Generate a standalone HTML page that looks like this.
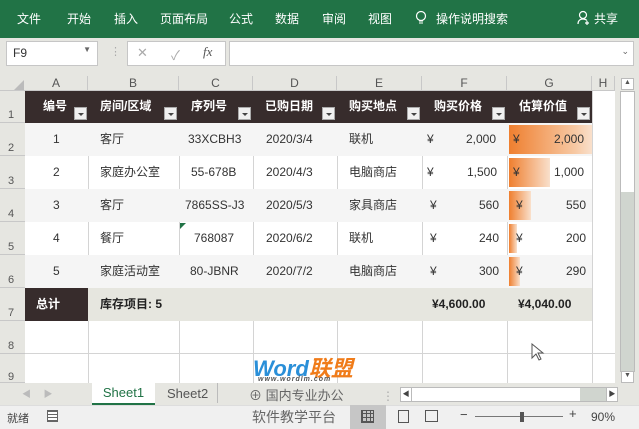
<!DOCTYPE html><html><head><meta charset="utf-8"><style>
*{margin:0;padding:0;box-sizing:border-box}
body{width:639px;height:429px;overflow:hidden;background:#e6e6e1;font-family:"Liberation Sans","Noto Sans CJK SC",sans-serif;position:relative;font-size:12px;color:#333}
.a{position:absolute}
.menu span{position:absolute;top:10px;color:#fff;font-size:12px}
.ch{position:absolute;top:76px;height:15px;text-align:center;font-size:12px;color:#555;border-right:1px solid #c8c8c8}
.rh{position:absolute;left:0;width:25px;font-size:11px;color:#555;border-bottom:1px solid #c8c8c8;text-align:left;padding-left:8px}
.c{position:absolute;font-size:12px;line-height:33px;height:33px;color:#333}
.hd{position:absolute;top:91px;height:32px;color:#fff;font-weight:bold;font-size:12px;line-height:30px}
.dd{position:absolute;top:107px;width:13px;height:13px;background:#f0f0f0;border:1px solid #aaa}
.dd:after{content:"";position:absolute;left:3px;top:5px;border:3px solid transparent;border-top:3px solid #444}
.vl{position:absolute;width:1px;background:#d4d4d4}
</style></head><body>
<div class="a" style="left:0;top:0;width:639px;height:38px;background:#217346"></div>
<div class="menu">
<span style="left:17px">文件</span><span style="left:67px">开始</span><span style="left:114px">插入</span><span style="left:160px">页面布局</span><span style="left:229px">公式</span><span style="left:275px">数据</span><span style="left:322px">审阅</span><span style="left:368px">视图</span><span style="left:436px">操作说明搜索</span><span style="left:594px">共享</span>
</div>
<svg class="a" style="left:415px;top:10px" width="12" height="16"><circle cx="6" cy="6" r="4.5" fill="none" stroke="#fff" stroke-width="1.2"/><path d="M4 11h4M4 13h4" stroke="#fff"/></svg>
<svg class="a" style="left:577px;top:10px" width="14" height="16"><circle cx="6" cy="5" r="3.5" fill="none" stroke="#fff" stroke-width="1.2"/><path d="M1 14c0-4 3-5 5-5s3 .5 4 1.5M10 11v4M8 13h4" stroke="#fff" fill="none" stroke-width="1.2"/></svg>
<div class="a" style="left:6px;top:41px;width:92px;height:25px;background:#fff;border:1px solid #c6c6c6;padding:4px 6px;font-size:12px">F9<span style="position:absolute;right:6px;top:3px;font-size:8px;color:#666">▼</span></div>
<div class="a" style="left:110px;top:45px;color:#aaa;font-size:11px">⋮</div>
<div class="a" style="left:127px;top:41px;width:99px;height:25px;background:#fff;border:1px solid #c6c6c6"></div>
<div class="a" style="left:137px;top:45px;color:#aaa;font-size:13px">✕</div>
<div class="a" style="left:171px;top:45px;color:#aaa;font-size:13px">✓</div>
<div class="a" style="left:203px;top:44px;font-style:italic;font-family:'Liberation Serif',serif;font-size:13px;color:#555">fx</div>
<div class="a" style="left:229px;top:41px;width:405px;height:25px;background:#fff;border:1px solid #c6c6c6"><span style="position:absolute;right:4px;top:4px;font-size:9px;color:#666">⌄</span></div>
<div class="a" style="left:25px;top:91px;width:590px;height:292px;background:#fff"></div>
<div class="a" style="left:0;top:75px;width:615px;height:16px;background:#e6e6e1;border-bottom:1px solid #c8c8c8"></div>
<div class="ch" style="left:25px;width:63px">A</div><div class="ch" style="left:88px;width:91px">B</div><div class="ch" style="left:179px;width:74px">C</div><div class="ch" style="left:253px;width:84px">D</div><div class="ch" style="left:337px;width:85px">E</div><div class="ch" style="left:422px;width:85px">F</div><div class="ch" style="left:507px;width:85px">G</div><div class="ch" style="left:592px;width:23px">H</div>
<div class="a" style="left:14px;top:80px;border:5px solid transparent;border-right-color:#bbb;border-bottom-color:#bbb"></div>
<div class="rh" style="top:91px;height:32px;padding-top:18px">1</div>
<div class="rh" style="top:123px;height:33px;padding-top:19px">2</div>
<div class="rh" style="top:156px;height:33px;padding-top:19px">3</div>
<div class="rh" style="top:189px;height:33px;padding-top:19px">4</div>
<div class="rh" style="top:222px;height:33px;padding-top:19px">5</div>
<div class="rh" style="top:255px;height:33px;padding-top:19px">6</div>
<div class="rh" style="top:288px;height:33px;padding-top:19px">7</div>
<div class="rh" style="top:321px;height:33px;padding-top:19px">8</div>
<div class="rh" style="top:354px;height:29px;padding-top:17px">9</div>
<div class="a" style="left:25px;top:353px;width:590px;height:1px;background:#d4d4d4"></div>
<div class="vl" style="left:88px;top:321px;height:62px"></div><div class="vl" style="left:179px;top:321px;height:62px"></div><div class="vl" style="left:253px;top:321px;height:62px"></div><div class="vl" style="left:337px;top:321px;height:62px"></div><div class="vl" style="left:422px;top:321px;height:62px"></div><div class="vl" style="left:507px;top:321px;height:62px"></div><div class="vl" style="left:592px;top:91px;height:292px"></div>
<div class="a" style="left:25px;top:91px;width:567px;height:32px;background:#372c2c"></div>
<div class="hd" style="left:43px">编号</div><div class="dd" style="left:74px"></div>
<div class="hd" style="left:100px">房间/区域</div><div class="dd" style="left:164px"></div>
<div class="hd" style="left:191px">序列号</div><div class="dd" style="left:238px"></div>
<div class="hd" style="left:265px">已购日期</div><div class="dd" style="left:322px"></div>
<div class="hd" style="left:349px">购买地点</div><div class="dd" style="left:407px"></div>
<div class="hd" style="left:434px">购买价格</div><div class="dd" style="left:492px"></div>
<div class="hd" style="left:519px">估算价值</div><div class="dd" style="left:577px"></div>
<div class="a" style="left:25px;top:123px;width:567px;height:33px;background:#f5f5f5"></div>
<div class="a" style="left:25px;top:189px;width:567px;height:33px;background:#f5f5f5"></div>
<div class="a" style="left:25px;top:255px;width:567px;height:33px;background:#f5f5f5"></div>
<div class="vl" style="left:88px;top:156px;height:33px"></div><div class="vl" style="left:179px;top:156px;height:33px"></div><div class="vl" style="left:253px;top:156px;height:33px"></div><div class="vl" style="left:337px;top:156px;height:33px"></div><div class="vl" style="left:422px;top:156px;height:33px"></div><div class="vl" style="left:507px;top:156px;height:33px"></div>
<div class="vl" style="left:88px;top:222px;height:33px"></div><div class="vl" style="left:179px;top:222px;height:33px"></div><div class="vl" style="left:253px;top:222px;height:33px"></div><div class="vl" style="left:337px;top:222px;height:33px"></div><div class="vl" style="left:422px;top:222px;height:33px"></div><div class="vl" style="left:507px;top:222px;height:33px"></div>
<div class="a" style="left:509px;top:125px;width:83px;height:29px;background:linear-gradient(90deg,#ef7f2f,#f7c9a4 80%,#f9e0cc)"></div>
<div class="a" style="left:509px;top:158px;width:41px;height:29px;background:linear-gradient(90deg,#ef7f2f,#f9e0cc)"></div>
<div class="a" style="left:509px;top:191px;width:22px;height:29px;background:linear-gradient(90deg,#ef7f2f,#f9e0cc)"></div>
<div class="a" style="left:509px;top:224px;width:8px;height:29px;background:linear-gradient(90deg,#ef7f2f,#f9e0cc)"></div>
<div class="a" style="left:509px;top:257px;width:11px;height:29px;background:linear-gradient(90deg,#ef7f2f,#f9e0cc)"></div>
<div class="c" style="top:123px;left:53px">1</div><div class="c" style="top:123px;left:100px">客厅</div><div class="c" style="top:123px;left:188px">33XCBH3</div><div class="c" style="top:123px;left:266px">2020/3/4</div><div class="c" style="top:123px;left:349px">联机</div><div class="c" style="top:123px;left:427px">¥</div><div class="c" style="top:123px;left:466px">2,000</div><div class="c" style="top:123px;left:513px">¥</div><div class="c" style="top:123px;left:554px">2,000</div>
<div class="c" style="top:156px;left:53px">2</div><div class="c" style="top:156px;left:100px">家庭办公室</div><div class="c" style="top:156px;left:191px">55-678B</div><div class="c" style="top:156px;left:266px">2020/4/3</div><div class="c" style="top:156px;left:349px">电脑商店</div><div class="c" style="top:156px;left:427px">¥</div><div class="c" style="top:156px;left:467px">1,500</div><div class="c" style="top:156px;left:513px">¥</div><div class="c" style="top:156px;left:554px">1,000</div>
<div class="c" style="top:189px;left:53px">3</div><div class="c" style="top:189px;left:100px">客厅</div><div class="c" style="top:189px;left:185px">7865SS-J3</div><div class="c" style="top:189px;left:266px">2020/5/3</div><div class="c" style="top:189px;left:349px">家具商店</div><div class="c" style="top:189px;left:430px">¥</div><div class="c" style="top:189px;left:479px">560</div><div class="c" style="top:189px;left:516px">¥</div><div class="c" style="top:189px;left:566px">550</div>
<div class="c" style="top:222px;left:53px">4</div><div class="c" style="top:222px;left:100px">餐厅</div><div class="c" style="top:222px;left:194px">768087</div><div class="c" style="top:222px;left:266px">2020/6/2</div><div class="c" style="top:222px;left:349px">联机</div><div class="c" style="top:222px;left:430px">¥</div><div class="c" style="top:222px;left:479px">240</div><div class="c" style="top:222px;left:516px">¥</div><div class="c" style="top:222px;left:566px">200</div>
<div class="c" style="top:255px;left:53px">5</div><div class="c" style="top:255px;left:100px">家庭活动室</div><div class="c" style="top:255px;left:190px">80-JBNR</div><div class="c" style="top:255px;left:266px">2020/7/2</div><div class="c" style="top:255px;left:349px">电脑商店</div><div class="c" style="top:255px;left:430px">¥</div><div class="c" style="top:255px;left:479px">300</div><div class="c" style="top:255px;left:516px">¥</div><div class="c" style="top:255px;left:566px">290</div>
<div class="a" style="left:180px;top:223px;border:3px solid transparent;border-left-color:#217346;border-top-color:#217346"></div>
<div class="a" style="left:25px;top:288px;width:567px;height:33px;background:#e6e6df"></div>
<div class="a" style="left:25px;top:288px;width:63px;height:33px;background:#372c2c"></div>
<div class="c" style="top:288px;left:36px;color:#fff;font-weight:bold">总计</div>
<div class="c" style="top:288px;left:100px;font-weight:bold;color:#222">库存项目: 5</div>
<div class="c" style="top:288px;left:432px;font-weight:bold;color:#222">¥4,600.00</div>
<div class="c" style="top:288px;left:518px;font-weight:bold;color:#222">¥4,040.00</div>
<div class="a" style="left:615px;top:75px;width:24px;height:308px;background:#e6e6e1"></div>
<div class="a" style="left:620px;top:91px;width:15px;height:281px;background:#d0d5cf;border:1px solid #bbb"></div>
<div class="a" style="left:621px;top:92px;width:13px;height:100px;background:#fff"></div>
<div class="a" style="left:621px;top:78px;width:13px;height:12px;background:#fff;border:1px solid #bbb;font-size:7px;text-align:center;color:#555">▲</div>
<div class="a" style="left:621px;top:371px;width:13px;height:12px;background:#fff;border:1px solid #bbb;font-size:7px;text-align:center;color:#555">▼</div>
<svg class="a" style="left:531px;top:343px" width="14" height="20"><path d="M1 1v14l4-4 3 6 2-1-3-6h5z" fill="#fff" stroke="#555"/></svg>
<div class="a" style="left:0;top:383px;width:639px;height:22px;background:#e6e6e1"></div>
<div class="a" style="left:22px;top:387px;color:#bbb;font-size:9px">◀&nbsp;&nbsp;&nbsp;&nbsp;&nbsp;▶</div>
<div class="a" style="left:92px;top:383px;width:63px;height:22px;background:#fff;border-bottom:2px solid #217346;color:#217346;font-size:13px;text-align:center;line-height:20px">Sheet1</div>
<div class="a" style="left:167px;top:386px;color:#555;font-size:13px">Sheet2</div>
<div class="a" style="left:217px;top:383px;width:1px;height:20px;background:#bbb"></div>
<div class="a" style="left:249px;top:385px;font-size:13px;color:#666">⊕ 国内专业办公</div>
<div class="a" style="left:253px;top:351px;font-size:22px;font-weight:bold;color:#2a8fd8;font-style:italic">Word<span style="color:#f07c1a">联盟</span></div>
<div class="a" style="left:258px;top:376px;font-size:7px;font-weight:bold;color:#555;font-style:italic;letter-spacing:1px">www.wordlm.com</div>
<div class="a" style="left:382px;top:389px;color:#aaa">⋮</div>
<div class="a" style="left:400px;top:387px;width:218px;height:15px;background:#d0d5cf;border:1px solid #bbb"></div>
<div class="a" style="left:412px;top:388px;width:168px;height:13px;background:#fff"></div>
<div class="a" style="left:400px;top:387px;width:12px;height:15px;background:#fff;border:1px solid #bbb;font-size:7px;color:#444;text-align:center;line-height:13px">◀</div>
<div class="a" style="left:606px;top:387px;width:12px;height:15px;background:#fff;border:1px solid #bbb;font-size:7px;color:#444;text-align:center;line-height:13px">▶</div>
<div class="a" style="left:0;top:405px;width:639px;height:24px;background:#f0f0f0;border-top:1px solid #ddd"></div>
<div class="a" style="left:7px;top:410px;font-size:11px;color:#444">就绪</div>
<div class="a" style="left:47px;top:410px;width:11px;height:12px;border:1px solid #666;background:repeating-linear-gradient(0deg,#666 0 1px,#fff 1px 3px)"></div>
<div class="a" style="left:252px;top:407px;font-size:14px;color:#666">软件教学平台</div>
<div class="a" style="left:350px;top:405px;width:36px;height:24px;background:#c6c6c6"></div>
<div class="a" style="left:361px;top:410px;width:13px;height:13px;border:1px solid #555;background:repeating-linear-gradient(90deg,#555 0 1px,transparent 1px 4px),repeating-linear-gradient(0deg,#555 0 1px,transparent 1px 4px)"></div>
<div class="a" style="left:398px;top:410px;width:11px;height:13px;border:1px solid #555"></div>
<div class="a" style="left:425px;top:410px;width:13px;height:12px;border:1px solid #555"></div>
<div class="a" style="left:460px;top:407px;font-size:13px;color:#444">−</div>
<div class="a" style="left:475px;top:416px;width:88px;height:1px;background:#777"></div>
<div class="a" style="left:520px;top:412px;width:4px;height:10px;background:#555"></div>
<div class="a" style="left:569px;top:406px;font-size:13px;color:#444">+</div>
<div class="a" style="left:591px;top:410px;font-size:12px;color:#444">90%</div>
</body></html>
